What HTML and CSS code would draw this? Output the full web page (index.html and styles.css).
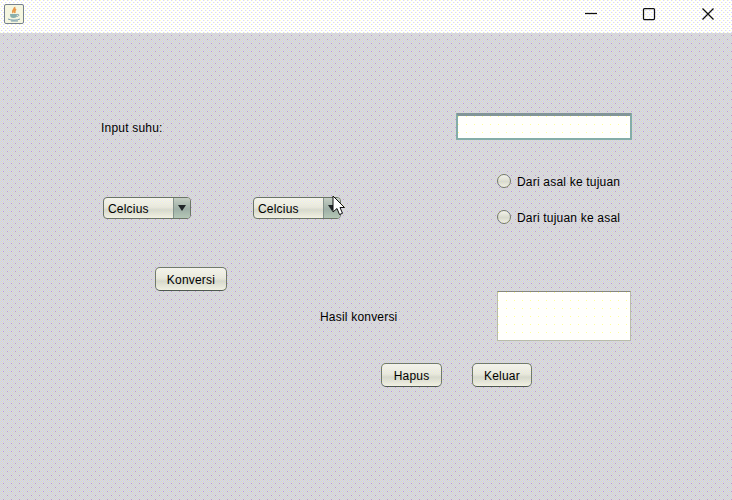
FILE: index.html
```
<!DOCTYPE html>
<html lang="id">
<head>
<meta charset="utf-8">
<title>Konversi suhu</title>
<link rel="stylesheet" href="styles.css">
</head>
<body>
<header class="titlebar">
  <svg class="app-icon" width="20" height="20" viewBox="0 0 20 20" fill="none">
    <rect x=".5" y=".5" width="19" height="19" rx="1.5" fill="#f5f6e0" stroke="#77828c"/>
    <path d="M10.500 3c1 2-3 3-1.500 6M12 5c-2 1.500-1.500 2.500-1 4" stroke="#e99a48" stroke-width="1.700"/>
    <path d="M6 10h7c0 3-1 4-3.500 4S6 13 6 10Z" fill="#8aafab"/>
    <path d="M13 10.500c3-.5 2 2-.5 2M4 15c3 1.500 9 1.500 12 0M7 17h7" stroke="#7b9eae"/>
  </svg>
  <svg class="window-controls" width="132" height="28" viewBox="0 0 132 28" fill="none" stroke="#111" stroke-width="1.250">
    <path d="M0 13.500h12"/>
    <rect x="58.500" y="8.500" width="11" height="11" rx="1"/>
    <path d="m117.500 8.500 11 11m0-11-11 11"/>
  </svg>
</header>
<main class="form">
  <div class="row input-row"><label for="suhu">Input suhu:</label><input class="input" id="suhu" type="text"></div>
  <div class="choices">
    <div class="combo">Celcius<span class="arrow"></span></div>
    <div class="combo">Celcius<span class="arrow"></span></div>
    <div class="radios">
      <div class="option"><span class="radio"></span>Dari asal ke tujuan</div>
      <div class="option"><span class="radio"></span>Dari tujuan ke asal</div>
    </div>
  </div>
  <button class="button convert">Konversi</button>
  <div class="row result-row"><span>Hasil konversi</span><div class="result"></div></div>
  <div class="actions"><button class="button">Hapus</button><button class="button exit">Keluar</button></div>
</main>
<svg class="cursor" width="14" height="22" viewBox="0 0 14 22"><path d="M1 1v16l4-3.500 2.500 6 3-1.200-2.500-5.800h4.500Z" fill="#fff" stroke="#111"/></svg>
</body>
</html>
```

FILE: styles.css
```
* { box-sizing: border-box; }
body {
  --dither: repeating-conic-gradient(rgb(204 204 255 / .45) 0 25%, rgb(255 255 153 / .4) 0 50%) 0 0 / 2px 2px fixed;
  margin: 0;
  width: 732px;
  height: 500px;
  overflow: hidden;
  position: relative;
  color: #000;
  font: 12px/16px "Liberation Sans", sans-serif;
  letter-spacing: .2px;
  background:
    conic-gradient(from 90deg at 7px 7px, #ccaaaa 25%, transparent 0) 0 0 / 8px 8px,
    conic-gradient(from 90deg at 7px 7px, #ccaaaa 25%, transparent 0) 4px 4px / 8px 8px,
    repeating-conic-gradient(#ccccff 0 25%, #e2e2b6 0 50%) 0 0 / 2px 2px;
}
.titlebar {
  height: 33px;
  display: flex;
  justify-content: space-between;
  align-items: flex-start;
  padding: 4px 15px 0 4px;
  background:
    conic-gradient(from 90deg at 3px 3px, #d6d6ff 25%, transparent 0) 0 1px / 4px 4px,
    conic-gradient(from 90deg at 3px 3px, #d6d6ff 25%, transparent 0) 2px 3px / 4px 4px,
    conic-gradient(from 90deg at 3px 3px, #ffffcc 25%, transparent 0) 1px 1px / 4px 4px,
    conic-gradient(from 90deg at 3px 3px, #ffffcc 25%, #fff 0) 3px 3px / 4px 4px;
}
.window-controls { margin-top: -4px; }
.form { height: 467px; padding-top: 80px; }
.row { display: flex; }
.input-row { height: 28px; padding-left: 101px; }
.input-row label { width: 355px; padding-top: 7px; }
.input {
  width: 176px;
  height: 27px;
  padding: 0 6px;
  outline: 0;
  border: 2px solid #84ada8;
  border-top: 3px solid #829598;
  border-radius: 1px;
  background: conic-gradient(from 90deg at 7px 7px, #ffff99 25%, #fffffc 0) 1px 1px / 8px 8px;
}
.choices { display: flex; align-items: flex-start; height: 126px; padding: 56px 0 0 103px; }
.combo {
  display: flex;
  align-items: center;
  justify-content: space-between;
  width: 88px;
  height: 22px;
  margin-right: 62px;
  padding: 1px 0 0 4px;
  border: 1px solid #6b7568;
  border-radius: 4px;
  background: var(--dither), linear-gradient(#fff, #ecece6 45%, #cdd1ca 60%, #fafaf0);
  overflow: hidden;
}
.arrow {
  width: 17px;
  height: 22px;
  margin-top: -1px;
  display: grid;
  place-items: center;
  border-left: 1px solid #84928b;
  background: linear-gradient(#c7d0c5, #9eafa6 55%, #b7c9b8);
}
.arrow::before { content: ""; border: 4px solid transparent; border-top: 6px solid #202528; border-bottom: 0; }
.radios { margin: -25px 0 0 94px; }
.option { display: flex; align-items: center; gap: 6px; height: 18px; margin-bottom: 18px; padding-top: 1px; }
.radio { width: 14px; height: 14px; margin-top: -1px; border: 1px solid #73786c; border-radius: 50%; background: var(--dither), linear-gradient(#fff, #d0d3cc 55%, #fafaf0); }
.button {
  display: block;
  height: 24px;
  padding: 1px 0 0;
  font: inherit;
  letter-spacing: inherit;
  color: #000;
  border: 1px solid #717a6c;
  border-bottom-color: #4e5950;
  border-radius: 5px;
  background: var(--dither), linear-gradient(#fff, #ecece6 45%, #cdd1ca 60%, #fafaf0);
}
.convert { width: 72px; margin-left: 155px; }
.result-row { height: 72px; padding-left: 320px; }
.result-row span { width: 177px; padding-top: 18px; }
.result {
  width: 134px;
  height: 50px;
  border: 1px solid #b8bcab;
  border-top-color: #858780;
  background: conic-gradient(from 90deg at 7px 7px, #ffff99 25%, #fffffc 0) 1px 1px / 8px 8px;
}
.actions { display: flex; gap: 30px; padding-left: 381px; }
.actions .button { width: 61px; }
.actions .exit { width: 60px; }
.cursor { position: absolute; left: 332px; top: 195px; }
```
